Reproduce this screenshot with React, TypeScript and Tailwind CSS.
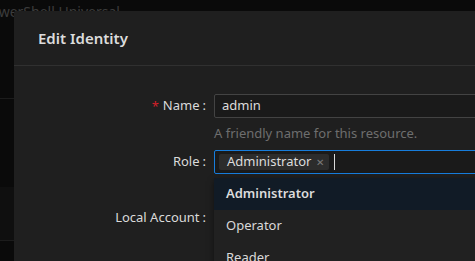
import React from "react";

export default function App() {
  const font = { fontFamily: '"Noto Sans", "Open Sans", sans-serif' };
  return (
    <div className="relative w-[475px] h-[261px] overflow-hidden bg-[#0a0a0a]" style={font}>
      {/* background page */}
      <div className="flex flex-col">
        <div className="h-[22px] -ml-[18px] pt-[2px] text-[14px] leading-[20px] text-[#3c3c3c] whitespace-nowrap">PowerShell Universal</div>
        <div className="h-[77px] border-b border-[#1c1c1c]"></div>
        <div className="h-[88px]"></div>
        <div className="h-[54px] bg-[#0f0f0f] border-b border-[#1c1c1c]"></div>
      </div>

      {/* modal */}
      <div className="absolute left-[14px] top-[11px] w-[520px] h-[300px] bg-[#1f1f1f] rounded-[2px]">
        <div className="h-[55px] px-[24px] flex items-center border-b border-[#303030]">
          <span className="text-[15px] font-semibold text-[#dcdcdc] leading-[22px]">Edit Identity</span>
        </div>
        <div className="pt-[28px] flex flex-col">
          {/* Name */}
          <div className="flex items-start">
            <div className="w-[200px] shrink-0 flex justify-end items-center h-[24px] text-[13px] text-[#dadada]">
              <span className="text-[#d32029] mr-[4px] text-[13px] leading-none">*</span>
              <span>Name</span>
              <span className="ml-[3px] mr-[8px]">:</span>
            </div>
            <div className="flex flex-col">
              <div className="w-[300px] h-[24px] border border-[#434343] bg-[#1a1a1a] rounded-[2px] px-[7px] flex items-center text-[13px] text-[#dcdcdc]">admin</div>
              <div className="h-[32px] flex items-center text-[13px] text-[#6e6e6e]">A friendly name for this resource.</div>
            </div>
          </div>
          {/* Role */}
          <div className="flex items-start">
            <div className="w-[200px] shrink-0 flex justify-end items-center h-[24px] text-[13px] text-[#dadada]">
              <span>Role</span>
              <span className="ml-[3px] mr-[8px]">:</span>
            </div>
            <div className="w-[300px] h-[24px] border border-[#177ddc] bg-[#1a1a1a] rounded-[2px] pl-[4px] flex items-center">
              <div className="h-[16px] bg-[#2c2c2c] rounded-[2px] pl-[8px] pr-[5px] flex items-center text-[13px] text-[#dcdcdc]">
                <span>Administrator</span>
                <span className="ml-[5px] text-[10px] text-[#7a7a7a]">✕</span>
              </div>
              <div className="ml-[5px] w-[1px] h-[16px] bg-[#d9d9d9]"></div>
            </div>
          </div>
          {/* Local Account */}
          <div className="flex items-start mt-[32px]">
            <div className="w-[200px] shrink-0 flex justify-end items-center h-[24px] text-[13px] text-[#dadada]">
              <span>Local Account</span>
              <span className="ml-[3px] mr-[8px]">:</span>
            </div>
          </div>
        </div>
      </div>

      {/* dropdown */}
      <div className="absolute left-[214px] top-[178px] w-[300px] h-[120px] bg-[#212121] shadow-[0_3px_6px_rgba(0,0,0,0.5)]">
        <div className="h-[32px] bg-[#111b26] pl-[12px] flex items-center text-[13px] font-semibold text-[#dcdcdc]">Administrator</div>
        <div className="h-[32px] pl-[12px] flex items-center text-[13px] text-[#d9d9d9]">Operator</div>
        <div className="h-[32px] pl-[12px] flex items-center text-[13px] text-[#d9d9d9]">Reader</div>
      </div>
    </div>
  );
}
